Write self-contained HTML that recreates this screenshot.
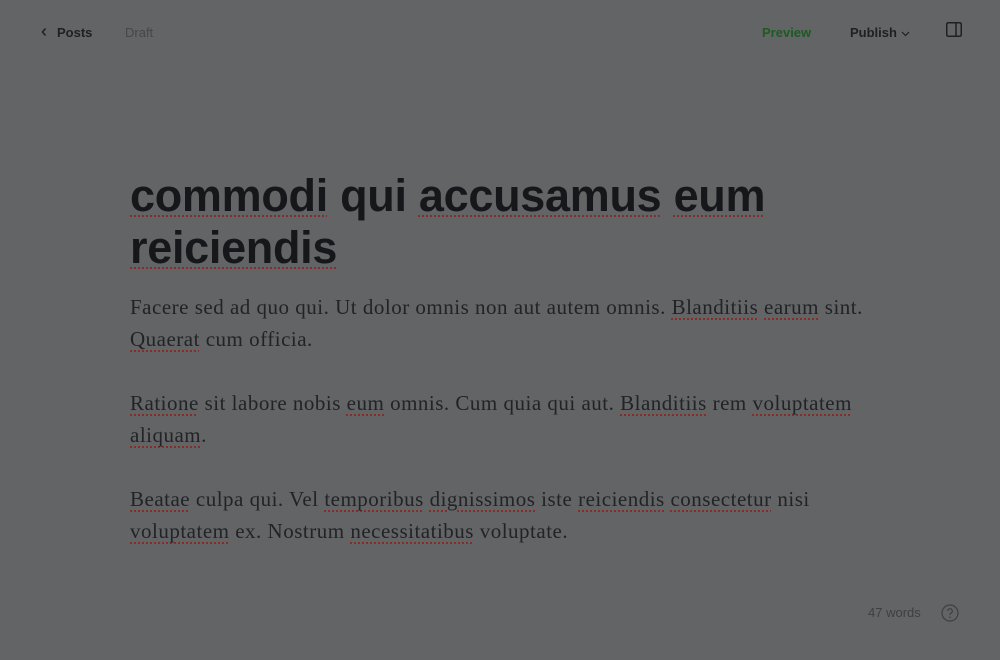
<!DOCTYPE html>
<html><head><meta charset="utf-8"><style>
body{margin:0;width:1000px;height:660px;background:#636466;overflow:hidden;position:relative;font-family:"Liberation Sans",sans-serif}
.a{position:absolute;white-space:nowrap}
.s{text-decoration:underline dotted #8a2b2b;text-decoration-thickness:2px;text-underline-offset:4px}
h1{position:absolute;left:130px;top:170px;margin:0;font-size:45px;line-height:52px;font-weight:700;color:#16171a;letter-spacing:-0.3px;white-space:nowrap}
.p{position:absolute;left:130px;margin:0;font-family:"Liberation Serif",serif;font-size:21px;letter-spacing:0.5px;line-height:32px;color:#222326;white-space:nowrap}
</style></head><body>
<div class="a" style="left:40px;top:25px;font-size:13px;font-weight:700;color:#1f2023">
<svg width="8" height="10" viewBox="0 0 8 10" style="margin-right:9px"><path d="M5.5 1.5L2.5 5l3 3.5" stroke="#1f2023" stroke-width="1.5" fill="none"/></svg>Posts</div>
<div class="a" style="left:125px;top:25px;font-size:13px;color:#45474c">Draft</div>
<div class="a" style="left:762px;top:25px;font-size:13px;font-weight:700;color:#1c5b22">Preview</div>
<div class="a" style="left:850px;top:25px;font-size:13px;font-weight:700;color:#1f2023">Publish <svg width="9" height="6" viewBox="0 0 9 6"><path d="M1 1l3.5 3.5L8 1" stroke="#1f2023" stroke-width="1.2" fill="none"/></svg></div>
<svg class="a" style="left:946px;top:22px" width="16" height="15" viewBox="0 0 16 15"><rect x="0.75" y="0.75" width="14.5" height="13.5" rx="1.5" stroke="#1f2023" stroke-width="1.5" fill="none"/><path d="M10 1v13" stroke="#1f2023" stroke-width="1.5"/></svg>
<h1><span class="s">commodi</span> qui <span class="s">accusamus</span> <span class="s">eum</span><br><span class="s">reiciendis</span></h1>
<p class="p" style="top:291px">Facere sed ad quo qui. Ut dolor omnis non aut autem omnis. <span class="s">Blanditiis</span> <span class="s">earum</span> sint.<br><span class="s">Quaerat</span> cum officia.</p>
<p class="p" style="top:387px"><span class="s">Ratione</span> sit labore nobis <span class="s">eum</span> omnis. Cum quia qui aut. <span class="s">Blanditiis</span> rem <span class="s">voluptatem</span><br><span class="s">aliquam</span>.</p>
<p class="p" style="top:483px"><span class="s">Beatae</span> culpa qui. Vel <span class="s">temporibus</span> <span class="s">dignissimos</span> iste <span class="s">reiciendis</span> <span class="s">consectetur</span> nisi<br><span class="s">voluptatem</span> ex. Nostrum <span class="s">necessitatibus</span> voluptate.</p>
<div class="a" style="left:868px;top:605px;font-size:13px;color:#3d3f44">47 words</div>
<svg class="a" style="left:941px;top:604px" width="18" height="18" viewBox="0 0 18 18"><circle cx="9" cy="9" r="8" stroke="#3d3f44" stroke-width="1.2" fill="none"/><path d="M6.7 7a2.3 2.3 0 1 1 3.2 2.1c-.6.3-.9.7-.9 1.4v.5" stroke="#3d3f44" stroke-width="1.2" fill="none"/><circle cx="9" cy="13.3" r=".8" fill="#3d3f44"/></svg>
</body></html>
